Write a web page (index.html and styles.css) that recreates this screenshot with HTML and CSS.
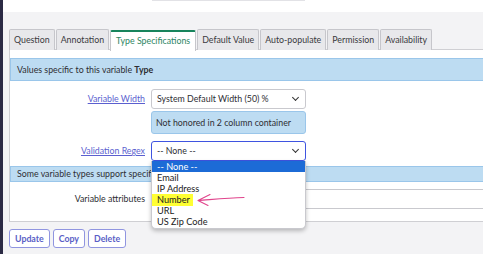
FILE: index.html
```html
<!DOCTYPE html>
<html>
<head>
<meta charset="utf-8">
<link rel="stylesheet" href="styles.css">
</head>
<body>
<div class="page">
  <div class="strip"></div>
  <div class="main">
    <div class="top"><div class="top-field"></div></div>
    <div class="content">
      <div class="tabs">
        <div class="tab">Question</div>
        <div class="tab">Annotation</div>
        <div class="tab active">Type Specifications</div>
        <div class="tab">Default Value</div>
        <div class="tab">Auto-populate</div>
        <div class="tab">Permission</div>
        <div class="tab">Availability</div>
      </div>
      <div class="panel">
        <div class="bar bar-lg">Values specific to this variable <b>Type</b></div>
        <div class="row r1">
          <a class="label">Variable Width</a>
          <div class="field">
            <div class="select">System Default Width (50) %<span class="chev"></span></div>
            <div class="info">Not honored in 2 column container</div>
          </div>
        </div>
        <div class="row r2">
          <a class="label">Validation Regex</a>
          <div class="field">
            <div class="select focus">-- None --<span class="chev"></span></div>
            <div class="dropdown">
              <div class="opt sel">-- None --</div>
              <div class="opt">Email</div>
              <div class="opt">IP Address</div>
              <div class="opt"><span class="hl">Number</span></div>
              <div class="opt">URL</div>
              <div class="opt">US Zip Code</div>
              <svg class="arrow" width="52" height="16" viewBox="0 0 52 16"><path d="M1 7.5 C 15 6.5, 30 5, 47 4.5 M1 7.5 L13 1.5 M1 7.5 L11 12.5" fill="none" stroke="#e0448c" stroke-width="1.1" stroke-linecap="round"/></svg>
            </div>
          </div>
        </div>
        <div class="bar bar-sm">Some variable types support specific attributes</div>
        <div class="row r3">
          <span class="plain">Variable attributes</span>
          <div class="field wide"><div class="input"></div></div>
        </div>
      </div>
      <div class="buttons">
        <button class="btn">Update</button>
        <button class="btn">Copy</button>
        <button class="btn">Delete</button>
      </div>
    </div>
  </div>
</div>
</body>
</html>
```
FILE: styles.css
```css
html, body { margin: 0; padding: 0; }
body {
  width: 483px; height: 254px; overflow: hidden;
  background: #f3f3f5;
  font-family: Lato, "Noto Sans", sans-serif;
  font-size: 8.8px;
  color: #2e2e33;
}
.page { display: flex; height: 254px; }
.strip { width: 3px; background: #2b2a44; flex: none; }
.main { flex: 1; min-width: 0; }
.top { height: 12px; background: #ffffff; }
.top-field { margin-left: 149px; width: 153px; height: 1px; background: #e2e2e6; }
.content { padding: 17px 0 0 6px; }
.tabs { display: flex; gap: 1px; height: 21px; white-space: nowrap; }
.tab {
  flex: none;
  border: 1px solid #c6c6cb; border-bottom: none;
  background: #e8e8eb; color: #3a3a40;
  padding: 0 4px; line-height: 20px; box-sizing: border-box;
  border-radius: 2px 2px 0 0;
}
.tab.active {
  background: #fff; color: #2d8563; padding: 0 5px;
  border-top: 2px solid #17845c; line-height: 18px; margin-top: 1px; height: 21px;
  position: relative; z-index: 2;
}
.panel {
  background: #fff; border: 1px solid #cfcfd3; border-right: none;
  margin-right: -20px; padding-top: 8px; height: 173px; box-sizing: border-box;
  margin-top: -1px;
}
.bar {
  background: #bddcf2; border: 1px solid #9ac6ea; border-right: none;
  padding-left: 6px; white-space: nowrap;
}
.bar-lg { line-height: 21px; }
.bar-sm { line-height: 14px; margin-top: 5px; }
.row { display: grid; grid-template-columns: 135px 1fr; column-gap: 6px; }
.r1 { margin-top: 8px; }
.r2 { margin-top: 7px; align-items: start; }
.r3 { margin-top: 7px; }
.label { color: #5b5fcf; text-decoration: underline; text-align: right; line-height: 20px; white-space: nowrap; }
.plain { text-align: right; line-height: 20px; color: #2e2e33; white-space: nowrap; }
.field { width: 155px; position: relative; }
.field.wide { width: auto; }
.select {
  height: 20px; box-sizing: border-box; border: 1px solid #c9c9ce; border-radius: 3px;
  line-height: 18px; padding-left: 5px; background: #fff; position: relative; color: #2e2e33;
  white-space: nowrap;
}
.select.focus { border-color: #3f54e0; }
.chev {
  position: absolute; right: 7px; top: 5px; width: 4px; height: 4px;
  border-right: 1.5px solid #333; border-bottom: 1.5px solid #333; transform: rotate(45deg);
}
.info {
  margin-top: 2px; height: 23px; box-sizing: border-box;
  background: #bddcf2; border: 1px solid #9ac6ea; border-radius: 3px;
  line-height: 21px; padding-left: 4px; white-space: nowrap;
}
.dropdown {
  position: absolute; left: 0; top: 20px; width: 155px; z-index: 5;
  background: #fff; border: 1px solid #c9c9ce; border-top: none; border-radius: 0 0 5px 5px;
  box-shadow: 0 2px 4px rgba(0,0,0,0.25); box-sizing: border-box; padding-bottom: 1px;
  font-size: 9.2px;
}
.opt { line-height: 11px; padding-left: 5px; color: #222; white-space: nowrap; }
.opt.sel { background: #1c6bd6; color: #fff; }
.hl { background: #ffff33; display: inline-block; line-height: 12px; margin: -1px 0 -1px -5px; padding: 0 3px 0 5px; }
.arrow { position: absolute; left: 45px; top: 32px; }
.input { height: 20px; box-sizing: border-box; border: 1px solid #c9c9ce; border-right: none; background: #fff; }
.buttons { display: flex; gap: 3px; margin-top: 7px; }
.btn {
  font-family: Lato, "Noto Sans", sans-serif; font-size: 8.8px; font-weight: bold;
  color: #5a5ec6; background: #fff; border: 1px solid #9095e0; border-radius: 3px;
  height: 19px; padding: 0 5px; margin: 0; line-height: 17px;
}
```
